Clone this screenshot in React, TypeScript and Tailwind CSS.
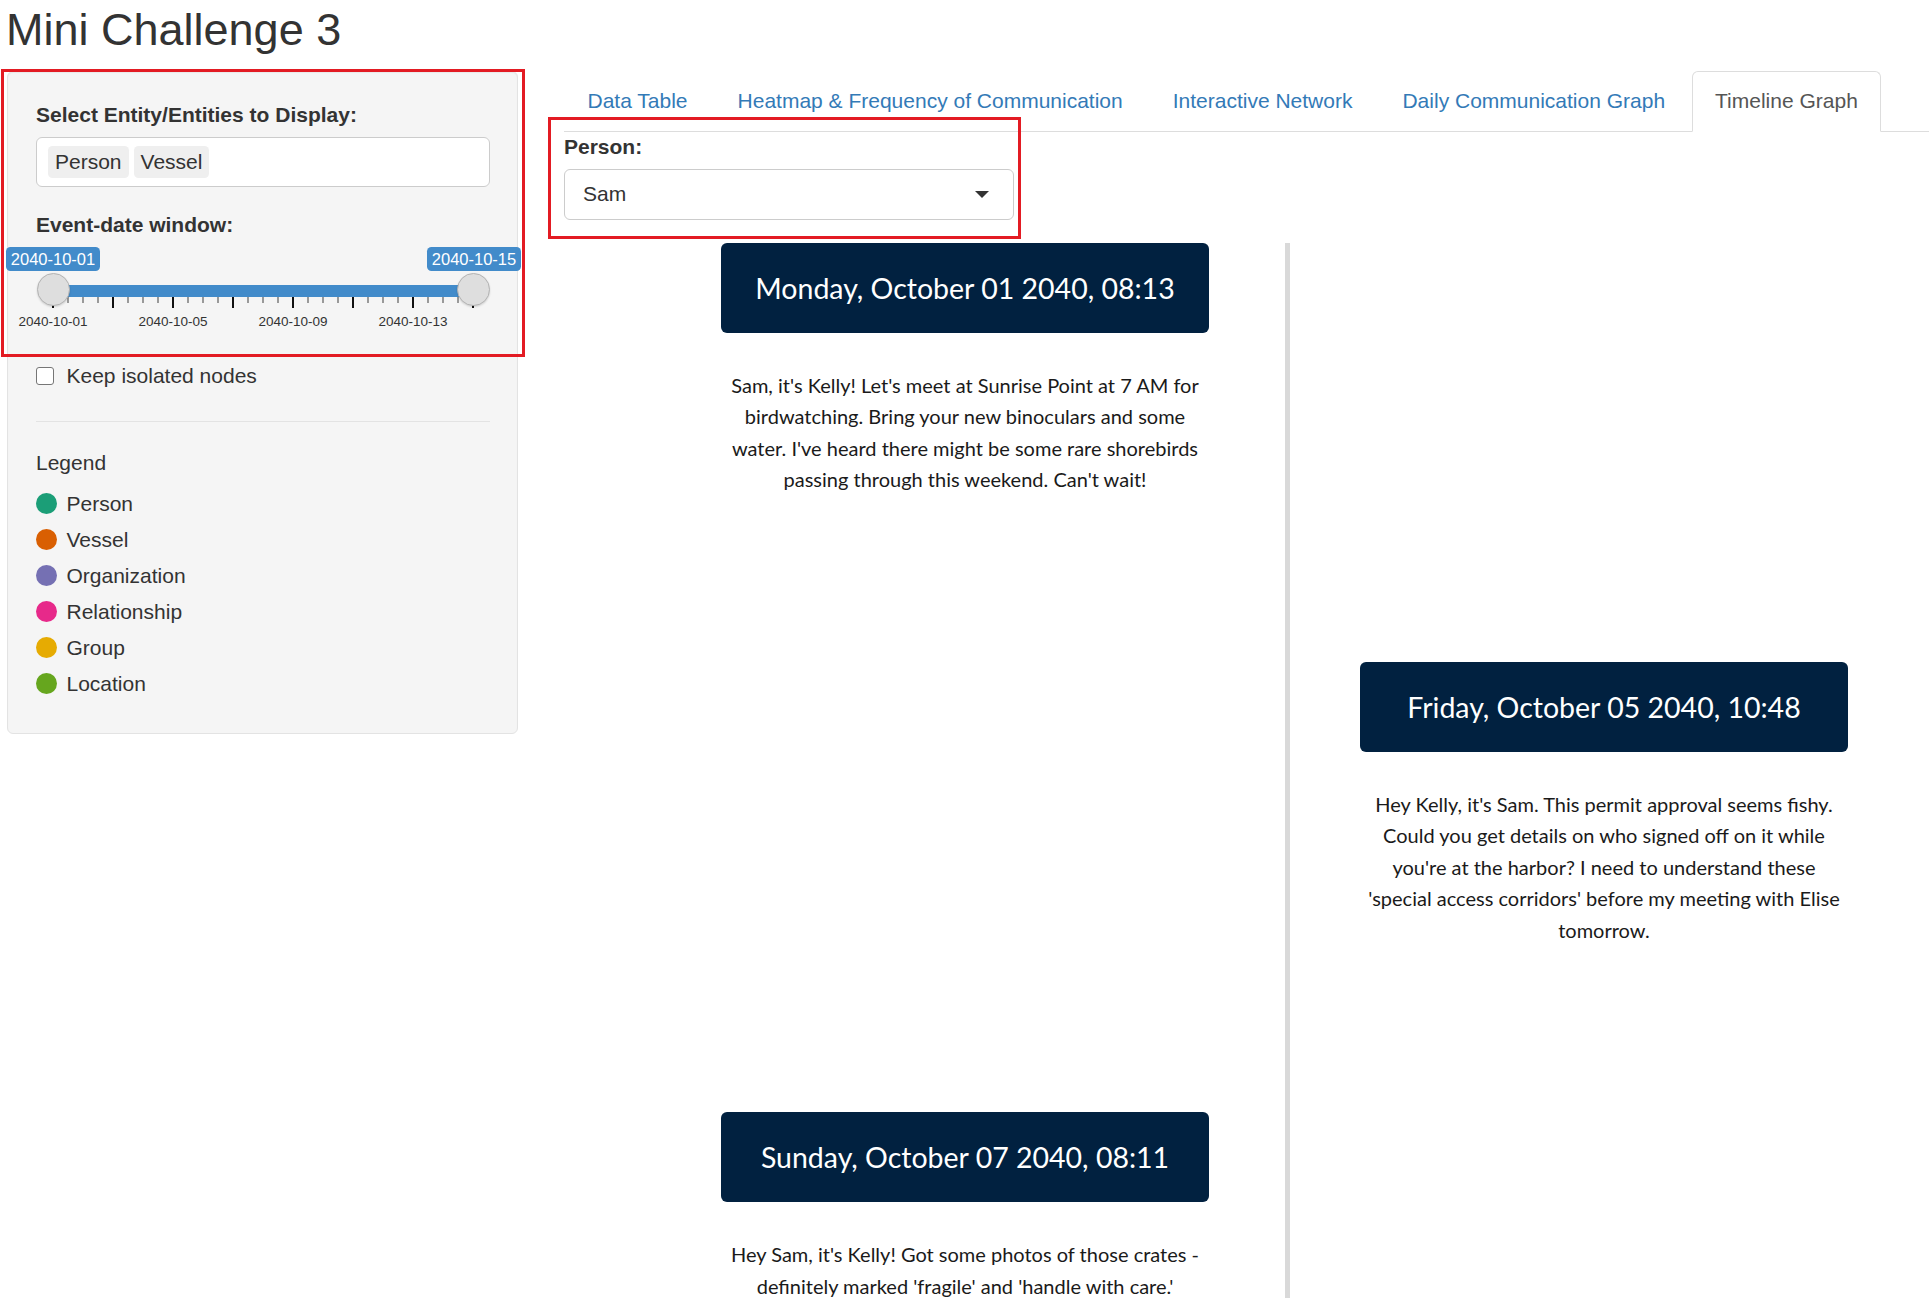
import React from "react";

const tabs = [
  "Data Table",
  "Heatmap & Frequency of Communication",
  "Interactive Network",
  "Daily Communication Graph",
  "Timeline Graph",
];

const legend = [
  { label: "Person", color: "#1b9e77" },
  { label: "Vessel", color: "#d95f02" },
  { label: "Organization", color: "#7570b3" },
  { label: "Relationship", color: "#e7298a" },
  { label: "Group", color: "#e6ab02" },
  { label: "Location", color: "#66a61e" },
];

const entries = [
  {
    side: "left",
    title: "Monday, October 01 2040, 08:13",
    lines: [
      "Sam, it's Kelly! Let's meet at Sunrise Point at 7 AM for",
      "birdwatching. Bring your new binoculars and some",
      "water. I've heard there might be some rare shorebirds",
      "passing through this weekend. Can't wait!",
    ],
  },
  {
    side: "right",
    title: "Friday, October 05 2040, 10:48",
    lines: [
      "Hey Kelly, it's Sam. This permit approval seems fishy.",
      "Could you get details on who signed off on it while",
      "you're at the harbor? I need to understand these",
      "'special access corridors' before my meeting with Elise",
      "tomorrow.",
    ],
  },
  {
    side: "left",
    title: "Sunday, October 07 2040, 08:11",
    lines: [
      "Hey Sam, it's Kelly! Got some photos of those crates -",
      "definitely marked 'fragile' and 'handle with care.'",
    ],
  },
];

const ticks = Array.from({ length: 29 }, (_, k) => k);
const tickLabels = [
  { x: 17, t: "2040-10-01" },
  { x: 137, t: "2040-10-05" },
  { x: 257, t: "2040-10-09" },
  { x: 377, t: "2040-10-13" },
];

function Entry({ title, lines }: { title: string; lines: string[] }) {
  return (
    <div className="w-[488px] pb-[166px]">
      <div className="flex h-[90px] items-center justify-center rounded-[6px] bg-[#012140] font-['Lato',sans-serif] text-[28.5px] leading-[36px] text-white">
        {title}
      </div>
      <div className="mt-[37px] whitespace-nowrap text-center font-['Lato',sans-serif] text-[20px] leading-[31.5px] text-[#1a1a1a]">
        {lines.map((l, i) => (
          <div key={i}>{l}</div>
        ))}
      </div>
    </div>
  );
}

export default function App() {
  return (
    <div className="relative h-[1298px] w-full overflow-hidden bg-white font-['Liberation_Sans',Arial,sans-serif] text-[#333]">
      <h2 className="mb-[16px] pl-[6px] pt-[5px] text-[45px] font-normal leading-[49.5px]">
        Mini Challenge 3
      </h2>

      <div className="flex items-start">
        {/* Sidebar */}
        <div className="ml-[7px] w-[511px] shrink-0 rounded-[6px] border border-[#e3e3e3] bg-[#f5f5f5] pb-[31px] pl-[28px] pr-[27px] pt-[28px] shadow-[inset_0_1px_1px_rgba(0,0,0,0.05)]">
          <div className="mb-[7.5px] text-[21px] font-bold leading-[30px]">
            Select Entity/Entities to Display:
          </div>
          <div className="mb-[22.5px] flex h-[50px] items-center gap-[5px] rounded-[6px] border border-[#ccc] bg-white pl-[11px]">
            <span className="rounded-[4.5px] bg-[#efefef] px-[7px] text-[21px] leading-[32px]">
              Person
            </span>
            <span className="rounded-[4.5px] bg-[#efefef] px-[7px] text-[21px] leading-[32px]">
              Vessel
            </span>
          </div>

          <div className="mb-[7.5px] text-[21px] font-bold leading-[30px]">
            Event-date window:
          </div>
          <div className="relative mb-[22.5px] h-[91.5px] w-[454px]">
            <div className="absolute left-[17px] top-[38px] h-[12px] w-[420px] bg-[#428bca]" />
            {ticks.map((k) => {
              const major = k % 4 === 0;
              return (
                <div
                  key={k}
                  className={
                    major
                      ? "absolute top-[50px] h-[11px] w-[1.5px] bg-[#111]"
                      : "absolute top-[50px] h-[6px] w-[1.5px] bg-[#9a9a9a]"
                  }
                  style={{ left: 17 + 15 * k - 0.75 }}
                />
              );
            })}
            {tickLabels.map((l) => (
              <div
                key={l.t}
                className="absolute top-[67px] w-[80px] text-center text-[13.5px] leading-[15px] text-[#333]"
                style={{ left: l.x - 40 }}
              >
                {l.t}
              </div>
            ))}
            <div className="absolute left-[0.5px] top-[25.5px] h-[33px] w-[33px] rounded-full border border-[#b3b3b3] bg-[#dedede] shadow-[0_1px_2px_rgba(0,0,0,0.15)]" />
            <div className="absolute left-[420.5px] top-[25.5px] h-[33px] w-[33px] rounded-full border border-[#b3b3b3] bg-[#dedede] shadow-[0_1px_2px_rgba(0,0,0,0.15)]" />
            <div className="absolute left-[-30px] top-[0px] h-[24px] w-[94px] rounded-[4.5px] bg-[#428bca] text-center text-[16.5px] leading-[24px] text-white">
              2040-10-01
            </div>
            <div className="absolute left-[391px] top-[0px] h-[24px] w-[94px] rounded-[4.5px] bg-[#428bca] text-center text-[16.5px] leading-[24px] text-white">
              2040-10-15
            </div>
          </div>

          <div className="flex h-[30px] items-center gap-[12.5px]">
            <span className="h-[18px] w-[18px] rounded-[3px] border border-[#767676] bg-white" />
            <span className="text-[21px] leading-[30px]">Keep isolated nodes</span>
          </div>

          <div className="mb-[25.5px] mt-[30px] border-t border-[#e3e3e3]" />

          <div className="text-[21px] leading-[30px]">Legend</div>
          <div className="mt-[8px]">
            {legend.map((l) => (
              <div key={l.label} className="flex h-[36px] items-center gap-[9.5px]">
                <span
                  className="h-[21px] w-[21px] rounded-full"
                  style={{ backgroundColor: l.color }}
                />
                <span className="text-[21px] leading-[30px]">{l.label}</span>
              </div>
            ))}
          </div>
        </div>

        {/* Main */}
        <div className="ml-[46px] w-[1446px] shrink-0">
          <div className="flex border-b border-[#ddd]">
            {tabs.map((t) => {
              const active = t === "Timeline Graph";
              return (
                <div
                  key={t}
                  className={
                    active
                      ? "-mb-px mr-[3px] rounded-t-[6px] border border-[#ddd] border-b-white bg-white px-[22.5px] py-[14.5px] text-[21px] leading-[30px] text-[#555]"
                      : "-mb-px mr-[3px] rounded-t-[6px] border border-transparent px-[22.5px] py-[14.5px] text-[21px] leading-[30px] text-[#337ab7]"
                  }
                >
                  {t}
                </div>
              );
            })}
          </div>

          <div className="mb-[7px] text-[21px] font-bold leading-[30px]">Person:</div>
          <div className="mb-[23px] flex h-[51px] w-[450px] items-center justify-between rounded-[6px] border border-[#ccc] bg-white pl-[18px] pr-[24px]">
            <span className="text-[21px] leading-[30px]">Sam</span>
            <span className="h-0 w-0 border-x-[7.5px] border-t-[7.5px] border-x-transparent border-t-[#333]" />
          </div>

          <div>
            {entries.map((e, i) => (
              <div key={i} className="flex">
                <div className="w-[721px] shrink-0 pl-[157px]">
                  {e.side === "left" ? <Entry title={e.title} lines={e.lines} /> : null}
                </div>
                <div className="w-[5px] shrink-0 bg-[#d9d9d9]" />
                <div className="pl-[70px]">
                  {e.side === "right" ? <Entry title={e.title} lines={e.lines} /> : null}
                </div>
              </div>
            ))}
          </div>
        </div>
      </div>

      {/* annotation boxes */}
      <div className="pointer-events-none absolute left-[1px] top-[69px] h-[288px] w-[524px] border-[3px] border-[#e31b23]" />
      <div className="pointer-events-none absolute left-[548px] top-[117px] h-[122px] w-[473px] border-[3px] border-[#e31b23]" />
    </div>
  );
}
